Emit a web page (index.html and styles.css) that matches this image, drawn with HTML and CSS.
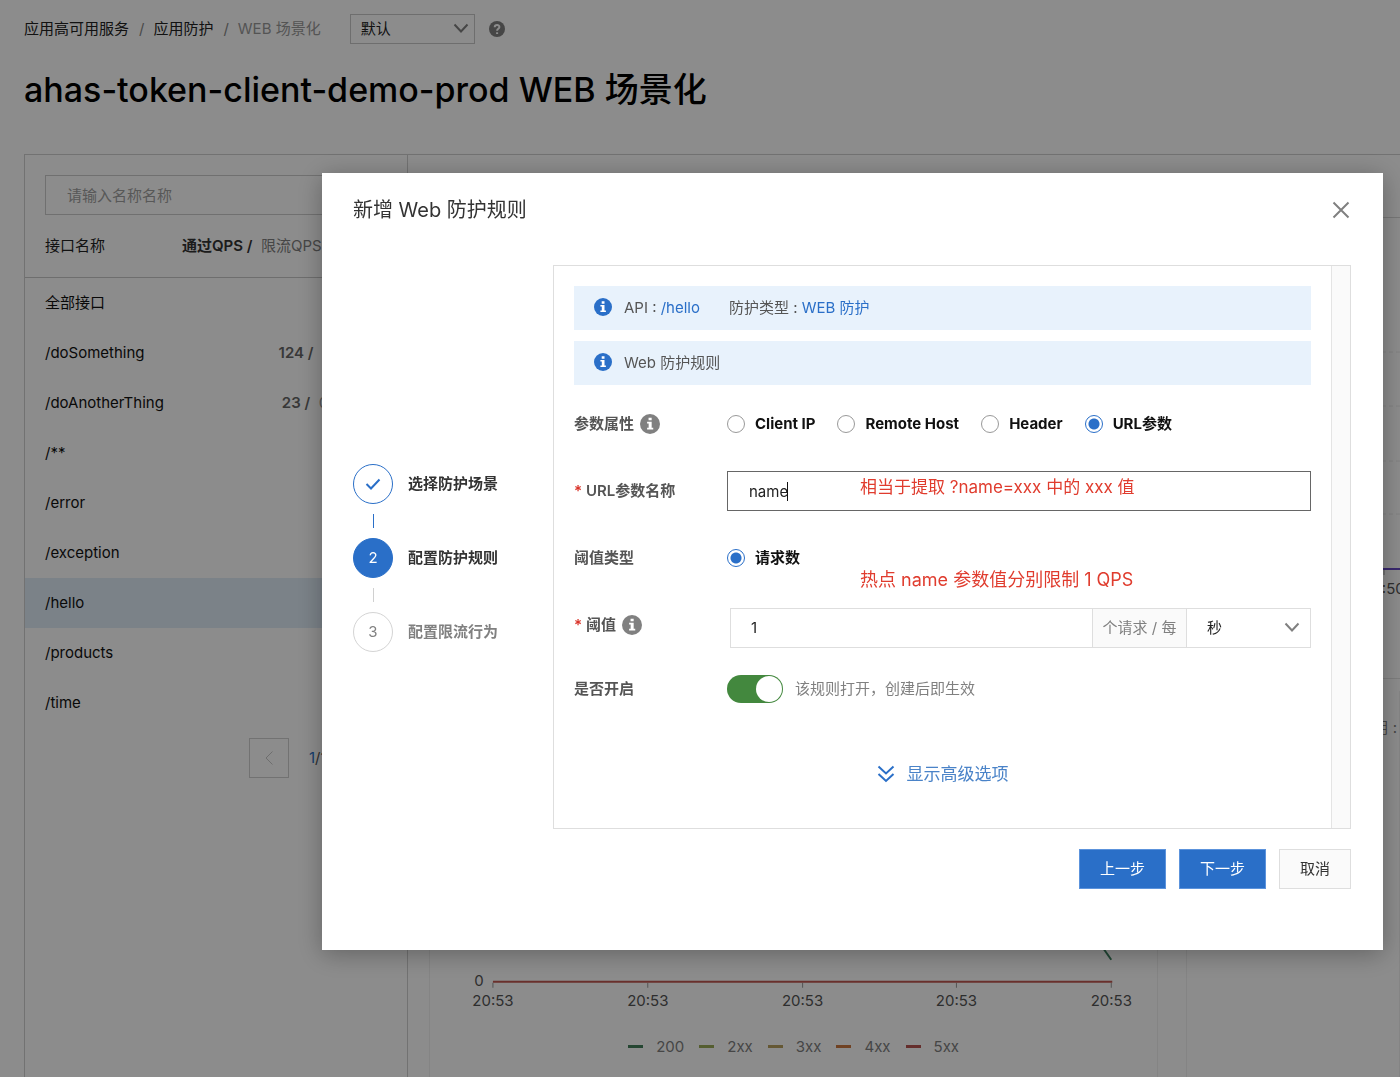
FILE: index.html
```html
<!DOCTYPE html>
<html lang="zh-CN">
<head>
<meta charset="utf-8">
<meta name="viewport" content="width=device-width, initial-scale=1">
<title>ahas-token-client-demo-prod WEB 场景化</title>
<link rel="stylesheet" href="styles.css">
</head>
<body>
<div class="page">
  <header class="topbar">
    <nav class="crumbs" aria-label="面包屑">
      <a href="#">应用高可用服务</a><span class="sep">/</span><a href="#">应用防护</a><span class="sep">/</span><span class="current">WEB 场景化</span>
    </nav>
    <div class="select select-small">
      <select aria-label="命名空间"><option>默认</option></select>
      <svg class="chevron" viewBox="0 0 16 10" aria-hidden="true"><path d="M1.500 1.500 8 8.500 14.500 1.500"/></svg>
    </div>
    <svg class="help" viewBox="0 0 16 16" aria-hidden="true"><circle cx="8" cy="8" r="8"/><path d="M5.700 6.200C5.800 3.300 10.400 3.300 10.400 6.100 10.400 7.800 8.100 7.800 8.100 9.700"/><path d="M8.100 11.300v1.700"/></svg>
  </header>
  <h1 class="title">ahas-token-client-demo-prod WEB 场景化</h1>

  <div class="layout">
    <aside class="sidebar">
      <div class="search"><input type="text" placeholder="请输入名称名称" aria-label="名称"></div>
      <div class="list-head"><span>接口名称</span><span class="muted"><b>通过QPS /</b>&nbsp; 限流QPS</span></div>
      <ul class="list">
        <li><a href="#">全部接口</a></li>
        <li><a href="#">/doSomething</a><span class="qps"><b>124 /</b>&nbsp; 0</span></li>
        <li><a href="#">/doAnotherThing</a><span class="qps"><b>23 /</b>&nbsp; 0</span></li>
        <li><a href="#">/**</a></li>
        <li><a href="#">/error</a></li>
        <li><a href="#">/exception</a></li>
        <li class="active"><a href="#">/hello</a></li>
        <li><a href="#">/products</a></li>
        <li><a href="#">/time</a></li>
      </ul>
      <div class="pager">
        <button type="button" disabled aria-label="上一页"><svg viewBox="0 0 10 16" aria-hidden="true"><path d="M8.500 1.500 2 8l6.500 6.500"/></svg></button>
        <span class="pages"><em>1</em>/1</span>
      </div>
    </aside>

    <main class="main">
      <div class="main-head"></div>
      <div class="cards">
        <section class="card upper"></section>
        <section class="card upper">
          <svg class="side-plot" aria-hidden="true">
            <path class="grid-line" d="M20 134H400M20 188H400M20 243H400M20 296H400"/>
            <path class="tick" d="M197 351v6"/>
            <path class="purple" d="M20 351H400"/>
            <text x="197" y="376">20:50</text>
          </svg>
        </section>
        <section class="card lower">
          <div class="card-head"></div>
          <svg class="plot" viewBox="0 0 728 246" aria-hidden="true">
            <path class="tick" d="M63 216v5M218 216v5M373 216v5M527 216v5M682 216v5"/>
            <path class="green" d="M652 150 682 193"/>
            <path class="red" d="M63 215H683"/>
            <text x="49" y="219">0</text>
            <text x="63" y="239">20:53</text><text x="218" y="239">20:53</text><text x="373" y="239">20:53</text><text x="527" y="239">20:53</text><text x="682" y="239">20:53</text>
          </svg>
          <ul class="legend">
            <li class="k200">200</li><li class="k2">2xx</li><li class="k3">3xx</li><li class="k4">4xx</li><li class="k5">5xx</li>
          </ul>
        </section>
        <section class="card lower"><div class="card-head">使用 :</div></section>
      </div>
    </main>
  </div>
</div>

<div class="overlay">
  <div class="dialog" role="dialog" aria-modal="true" aria-labelledby="dialog-title">
    <div class="dialog-head">
      <h2 id="dialog-title">新增 Web 防护规则</h2>
      <button class="close" type="button" aria-label="关闭"><svg viewBox="0 0 18 18" aria-hidden="true"><path d="M1.500 1.500 16.500 16.500M16.500 1.500 1.500 16.500"/></svg></button>
    </div>
    <form class="dialog-body">
      <ol class="steps">
        <li class="done"><span class="dot"><svg viewBox="0 0 16 12" aria-hidden="true"><path d="M1.500 6 6 10.500 14.500 1.500"/></svg></span>选择防护场景</li>
        <li class="now"><span class="dot">2</span>配置防护规则</li>
        <li class="todo"><span class="dot">3</span>配置限流行为</li>
      </ol>
      <div class="panel">
        <div class="panel-content">
          <div class="notice">
            <svg class="info" viewBox="0 0 18 18" aria-hidden="true"><circle cx="9" cy="9" r="9"/><path d="M7.700 3.300h2.800v2.400H7.700zM6.400 7h4.100v5.400h1.400V14H6.400v-1.600h1.400V8.600H6.400z"/></svg>
            <span>API : <a href="#">/hello</a></span><span>防护类型 : <a href="#">WEB 防护</a></span>
          </div>
          <div class="notice">
            <svg class="info" viewBox="0 0 18 18" aria-hidden="true"><circle cx="9" cy="9" r="9"/><path d="M7.700 3.300h2.800v2.400H7.700zM6.400 7h4.100v5.400h1.400V14H6.400v-1.600h1.400V8.600H6.400z"/></svg>
            <span>Web 防护规则</span>
          </div>
          <div class="fields">
            <div class="row" role="radiogroup" aria-labelledby="attr-label">
              <span class="label" id="attr-label">参数属性 <svg class="info gray" viewBox="0 0 18 18" aria-hidden="true"><circle cx="9" cy="9" r="9"/><path d="M7.700 3.300h2.800v2.400H7.700zM6.400 7h4.100v5.400h1.400V14H6.400v-1.600h1.400V8.600H6.400z"/></svg></span>
              <div class="radios">
                <label><input type="radio" name="attr">Client IP</label>
                <label><input type="radio" name="attr">Remote Host</label>
                <label><input type="radio" name="attr">Header</label>
                <label><input type="radio" name="attr" checked>URL参数</label>
              </div>
            </div>
            <div class="row">
              <label class="label" for="param"><i>*</i>URL参数名称</label>
              <div class="textbox">
                <input id="param" type="text" value="name"><span class="caret"></span>
                <span class="note note-param">相当于提取 ?name=xxx 中的 xxx 值</span>
              </div>
            </div>
            <div class="row" role="radiogroup" aria-labelledby="type-label">
              <span class="label" id="type-label">阈值类型</span>
              <div class="radios">
                <label><input type="radio" name="type" checked>请求数</label>
                <span class="note note-limit">热点 name 参数值分别限制 1 QPS</span>
              </div>
            </div>
            <div class="row threshold">
              <label class="label" for="limit"><i>*</i>阈值 <svg class="info gray" viewBox="0 0 18 18" aria-hidden="true"><circle cx="9" cy="9" r="9"/><path d="M7.700 3.300h2.800v2.400H7.700zM6.400 7h4.100v5.400h1.400V14H6.400v-1.600h1.400V8.600H6.400z"/></svg></label>
              <div class="group">
                <input id="limit" type="text" value="1">
                <span class="addon">个请求 / 每</span>
                <div class="select">
                  <select aria-label="时间单位"><option>秒</option></select>
                  <svg class="chevron" viewBox="0 0 16 10" aria-hidden="true"><path d="M1.500 1.500 8 8.500 14.500 1.500"/></svg>
                </div>
              </div>
            </div>
            <div class="row">
              <label class="label" for="enabled">是否开启</label>
              <div class="toggle"><input id="enabled" type="checkbox" role="switch" checked><span>该规则打开，创建后即生效</span></div>
            </div>
          </div>
          <a class="advanced" href="#"><svg viewBox="0 0 18 18" aria-hidden="true"><path d="M1.500 1.500 9 8.500 16.500 1.500M1.500 9 9 16 16.500 9"/></svg>显示高级选项</a>
        </div>
        <div class="track"></div>
      </div>
    </form>
    <div class="dialog-foot">
      <button class="btn primary" type="button">上一步</button>
      <button class="btn primary" type="button">下一步</button>
      <button class="btn" type="button">取消</button>
    </div>
  </div>
</div>
</body>
</html>
```
FILE: styles.css
```css
* { box-sizing: border-box; }
body {
  margin: 0;
  background: #fff;
  color: #222;
  font: 15px/20px Inter, "Noto Sans CJK SC", sans-serif;
}
input, select, button { font: inherit; color: inherit; margin: 0; }
a { color: inherit; text-decoration: none; }
ul, ol { list-style: none; margin: 0; padding: 0; }
svg { display: block; fill: none; flex: none; }

/* Page behind the dialog */
.page { display: flex; flex-direction: column; min-height: 100vh; padding-left: 24px; overflow: hidden; }
.topbar { display: flex; align-items: center; height: 30px; margin-top: 14px; }
.crumbs { display: flex; color: #222; white-space: nowrap; }
.sep { padding: 0 9px 0 10px; color: #888; }
.current { color: #999; }
.select { position: relative; background: #fff; border: 1px solid #dedede; }
.select select { width: 100%; height: 100%; padding: 0 20px; border: 0; background: transparent; appearance: none; outline: 0; }
.chevron { position: absolute; right: 10px; top: 50%; width: 16px; height: 10px; margin-top: -6px; stroke: #808080; stroke-width: 2; pointer-events: none; }
.select-small { width: 125px; height: 30px; margin-left: 29px; border-color: #c8c8c8; }
.select-small select { padding: 0 10px; }
.select-small .chevron { right: 5px; }
.help { width: 16px; height: 16px; margin-left: 14px; }
.help circle { fill: #808080; }
.help path { stroke: #fff; stroke-width: 2; }
.title { margin: 22px 0 0; color: #000; font-size: 34px; line-height: 48px; font-weight: 500; white-space: nowrap; }

.layout { display: flex; flex: 1; margin-top: 40px; border: 1px solid #d0d0d0; border-width: 1px 0 0 1px; }
.sidebar { flex: none; width: 383px; border-right: 1px solid #d0d0d0; }
.search { padding: 20px 20px 0; }
.search input { width: 100%; height: 40px; padding: 0 21px; border: 1px solid #cdcdcd; background: transparent; }
.search input::placeholder { color: #a0a0a0; opacity: 1; }
.list-head { display: grid; grid-template-columns: 137px 1fr; align-items: center; height: 63px; padding: 0 20px; border-bottom: 1px solid #c8c8c8; }
.muted { color: #808080; }
.muted b { color: #333; font-weight: 600; }
.list li { display: flex; justify-content: space-between; align-items: center; height: 50px; padding: 0 20px; color: #111; }
.list .active { background: #e0edf8; }
.qps { width: 164px; text-align: center; color: #999; }
.qps b { color: #666; font-weight: 600; }
.pager { display: flex; align-items: center; gap: 20px; padding: 10px 0 0 224px; }
.pager button { display: grid; place-items: center; width: 40px; height: 40px; padding: 0; background: transparent; border: 1px solid #d0d0d0; }
.pager svg { width: 10px; height: 16px; stroke: #c8c8c8; stroke-width: 1; }
.pages { color: #555; }
.pages em { color: #2a6fc4; font-style: normal; }

.main { flex: 1; display: flex; flex-direction: column; min-width: 0; }
.main-head { height: 63px; border-bottom: 1px solid #d8d8d8; }
.cards { flex: 1; display: grid; grid-template: 461px 1fr / 730fr 214fr; column-gap: 28px; row-gap: 12px; padding-left: 21px; }
.card { display: flex; flex-direction: column; min-width: 0; border: 1px solid #f0f0f0; border-width: 1px 0 0 1px; }
.upper { border-width: 0 0 1px 1px; border-bottom-color: #e4e4e4; }
.lower { border-top: 0; border-right-width: 1px; }
.card-head { height: 76px; padding: 27px 2px; text-align: right; color: #808080; }
.side-plot { width: 100%; height: 100%; overflow: hidden; }
.plot { width: 100%; }
svg text { fill: #555; font-size: 15px; text-anchor: middle; }
.grid-line { stroke: #eaeaea; stroke-dasharray: 4 3; }
.tick { stroke: #999; }
.purple { stroke: #6849c8; stroke-width: 2; }
.red { stroke: #c05850; stroke-width: 2; }
.green { stroke: #3c8060; stroke-width: 2; }
.legend { display: flex; justify-content: center; gap: 15px; margin-top: 24px; color: #808080; }
.legend li { display: flex; align-items: center; gap: 13px; }
.legend li::before { content: ""; width: 15px; height: 3px; background: #44805c; }
.legend .k2::before { background: #9cac58; }
.legend .k3::before { background: #b8a060; }
.legend .k4::before { background: #cc7840; }
.legend .k5::before { background: #b85450; }

/* Dialog */
.overlay { position: fixed; inset: 0; display: flex; align-items: flex-start; padding: 173px 17px 0 322px; background: rgba(0, 0, 0, .45); overflow: auto; }
.dialog { flex: 1; min-width: 0; padding: 0 32px 60px 31px; background: #fff; border: 1px solid #fff; border-width: 1px 0; box-shadow: 0 4px 24px rgba(0, 0, 0, .3); }
.dialog-head { display: flex; justify-content: space-between; align-items: center; height: 72px; }
.dialog-head h2 { margin: 0; font-size: 20px; line-height: 28px; font-weight: 400; color: #333; }
.close { width: 20px; height: 20px; padding: 1px; border: 0; background: none; }
.close svg { width: 18px; height: 18px; stroke: #808080; stroke-width: 2; }
.dialog-body { display: flex; margin-top: 19px; }
.steps { flex: none; width: 200px; padding-top: 199px; font-weight: 600; }
.steps li { position: relative; display: flex; align-items: center; gap: 15px; color: #333; }
.steps li + li { margin-top: 34px; }
.steps li + li::after { content: ""; position: absolute; left: 20px; top: -24px; width: 1px; height: 14px; background: #2a6fc8; }
.steps .todo.todo::after { background: #d0d0d0; }
.dot { display: grid; place-items: center; width: 40px; height: 40px; border: 1px solid #2a6fc8; border-radius: 50%; color: #fff; font-weight: 400; }
.dot svg { width: 16px; height: 12px; stroke: #2a6fc8; stroke-width: 2; }
.now .dot { background: #2a6fc8; }
.steps .todo { color: #808080; }
.todo .dot { border-color: #d4d4d4; color: #808080; }
.panel { flex: 1; display: flex; min-width: 0; border: 1px solid #dedede; }
.panel-content { flex: 1; min-width: 0; padding: 20px 20px 42px; }
.track { width: 19px; background: #fafafa; border-left: 1px solid #e4e4e4; }
.notice { display: flex; align-items: center; height: 44px; padding-left: 20px; background: #e8f2fc; color: #555; }
.notice + .notice { margin-top: 11px; }
.notice span + span { margin-left: 29px; }
.notice a { color: #2a6fc8; }
.info { width: 18px; height: 18px; }
.info circle { fill: #2a6fc8; }
.info path { fill: #fff; }
.notice .info { margin: 0 12px 2px 0; }
.gray { width: 20px; height: 20px; margin-left: 6px; }
.gray circle { fill: #808080; }
.fields { display: grid; row-gap: 27px; margin-top: 19px; }
.row { display: grid; grid-template-columns: 153px 1fr; align-items: center; height: 40px; }
.label { display: flex; align-items: center; color: #555; font-weight: 600; }
.label i { width: 12px; color: #d93026; font-style: normal; }
.radios { position: relative; display: flex; gap: 22px; color: #111; font-weight: 700; }
.radios label { display: flex; align-items: center; gap: 10px; white-space: nowrap; }
.radios input { appearance: none; width: 18px; height: 18px; border: 1px solid #999; border-radius: 50%; background: #fff; }
.radios input:checked { border-color: #2a6fc8; background: radial-gradient(circle, #2a6fc8 5px, #fff 6px); }
.textbox { position: relative; }
.textbox input { width: 100%; height: 40px; padding: 0 21px; border: 1px solid #666; outline: 0; background: #fff; }
.caret { position: absolute; left: 60px; top: 11px; width: 1px; height: 19px; background: #111; }
.note { position: absolute; left: 133px; color: #e03c2e; line-height: 24px; font-weight: 400; white-space: nowrap; }
.note-param { top: 4px; font-size: 17px; }
.note-limit { top: 20px; font-size: 18px; }
.threshold { margin: 3px 0 -6px; }
.threshold .label { padding-bottom: 6px; }
.group { display: flex; height: 40px; margin-left: 3px; }
.group > input { flex: 1; min-width: 0; padding: 0 20px; border: 1px solid #dedede; border-right: 0; outline: 0; }
.addon { display: flex; align-items: center; justify-content: center; width: 94px; border: 1px solid #dedede; border-right: 0; background: #fafafa; color: #808080; }
.group .select { width: 125px; }
.toggle { display: flex; align-items: center; gap: 12px; color: #808080; }
.toggle input { appearance: none; display: flex; justify-content: flex-end; width: 56px; height: 28px; padding: 1px; border-radius: 14px; background: #43883e; }
.toggle input::before { content: ""; width: 26px; height: 26px; border-radius: 50%; background: #fff; }
.advanced { display: flex; justify-content: center; align-items: center; gap: 12px; margin-top: 53px; color: #4a83c8; font-size: 17px; line-height: 24px; }
.advanced svg { width: 18px; height: 18px; stroke: #2a6fc8; stroke-width: 2; }
.dialog-foot { display: flex; justify-content: flex-end; gap: 13px; margin-top: 20px; }
.btn { height: 40px; padding: 0 20px; border: 1px solid #dedede; background: #fafafa; color: #333; }
.primary { border-color: #5c93dc; background: #2a6fc8; color: #fff; }
```
